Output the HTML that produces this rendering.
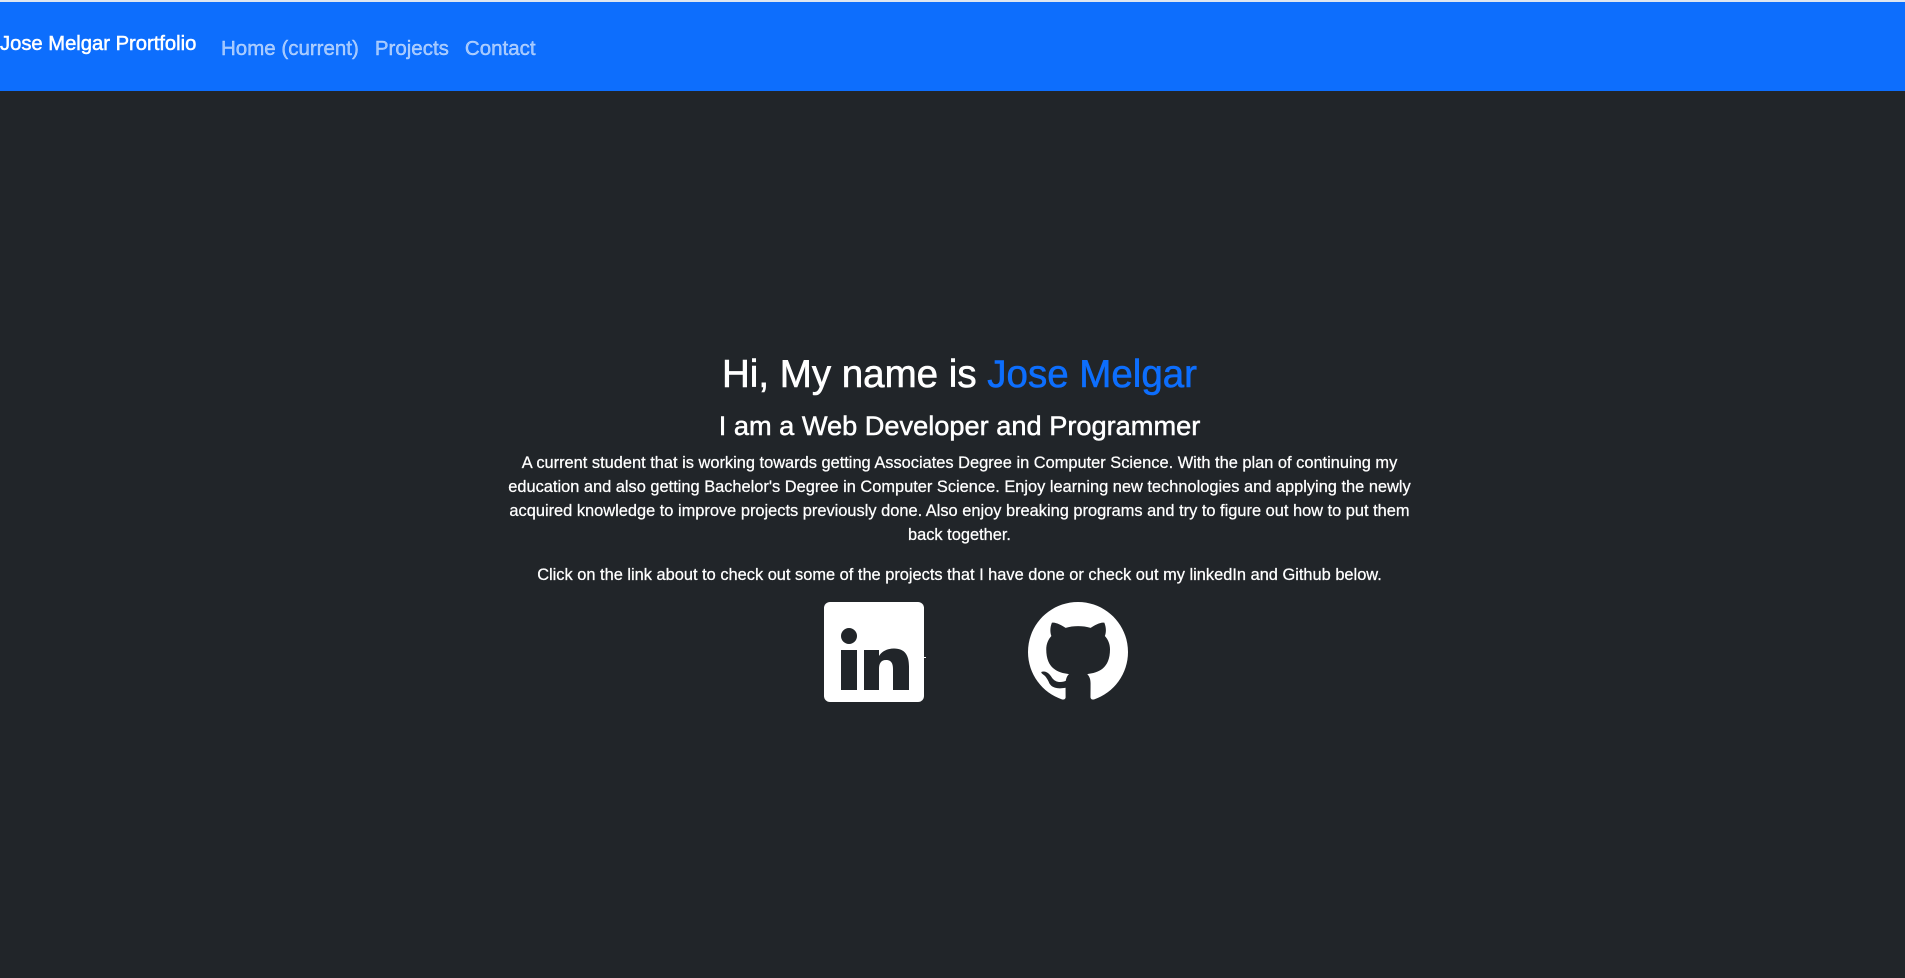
<!DOCTYPE html>
<html><head><meta charset="utf-8">
<style>
html,body{margin:0;padding:0;}
body{width:1905px;height:978px;background:#212529;font-family:"Liberation Sans",sans-serif;color:#fff;overflow:hidden;position:relative;}
.top{position:absolute;top:0;left:0;width:1905px;height:2px;background:#dfe6f0;}
nav{position:absolute;top:2px;left:0;width:1905px;height:89px;background:#0d6efd;}
.brand{position:absolute;left:0;top:31px;font-size:20.2px;color:#fff;white-space:nowrap;-webkit-text-stroke:0.5px #fff;}
.links{position:absolute;left:221px;top:35px;font-size:20.5px;color:rgba(255,255,255,.6);white-space:nowrap;-webkit-text-stroke:0.4px rgba(255,255,255,.6);}
.links span{margin-right:16px;}
.c{position:absolute;left:7px;width:1905px;text-align:center;white-space:nowrap;}
.h1{top:353px;font-size:38.5px;-webkit-text-stroke:0.6px #fff;}
.h1 b{font-weight:normal;color:#0d6efd;-webkit-text-stroke:0.6px #0d6efd;}
.h3{top:410px;font-size:27.2px;-webkit-text-stroke:0.5px #fff;}
.p{top:451px;font-size:16.4px;line-height:24px;-webkit-text-stroke:0.25px #fff;}
.p2{top:563px;font-size:16.4px;line-height:24px;-webkit-text-stroke:0.25px #fff;}
</style></head><body>
<div class="top"></div>
<nav>
<div class="brand">Jose Melgar Prortfolio</div>
<div class="links"><span>Home (current)</span><span>Projects</span><span>Contact</span></div>
</nav>
<div class="c h1">Hi, My name is <b>Jose Melgar</b></div>
<div class="c h3">I am a Web Developer and Programmer</div>
<div class="c p">A current student that is working towards getting Associates Degree in Computer Science. With the plan of continuing my<br>education and also getting Bachelor's Degree in Computer Science. Enjoy learning new technologies and applying the newly<br>acquired knowledge to improve projects previously done. Also enjoy breaking programs and try to figure out how to put them<br>back together.</div>
<div class="c p2">Click on the link about to check out some of the projects that I have done or check out my linkedIn and Github below.</div>
<svg style="position:absolute;left:824px;top:602px" width="102" height="100" viewBox="0 0 102 100">
<rect x="0" y="0" width="100" height="100" rx="6" fill="#fff"/>
<circle cx="25" cy="34" r="8" fill="#212529"/>
<rect x="17" y="48" width="16" height="40" fill="#212529"/>
<path d="M40 48h15v6c3-5 9-7.5 15-7.5 11 0 15 7 15 18V88H69V67c0-6-2-9-7-9s-7 3.5-7 9v21H40z" fill="#212529"/>
<rect x="93" y="55" width="9" height="1" fill="#fff"/>
</svg>
<svg style="position:absolute;left:1028px;top:602px" width="100" height="100" viewBox="0 0 16 16">
<path fill="#fff" d="M8 0C3.58 0 0 3.58 0 8c0 3.54 2.29 6.53 5.47 7.590.4.07.55-.17.55-.38 0-.19-.01-.82-.01-1.49-2.01.37-2.53-.49-2.69-.94-.09-.23-.48-.94-.82-1.13-.28-.15-.68-.52-.01-.53.63-.01 1.08.58 1.23.82.72 1.21 1.87.87 2.33.66.07-.52.28-.87.51-1.07-1.78-.2-3.64-.89-3.64-3.95 0-.87.31-1.59.82-2.15-.08-.2-.36-1.02.08-2.12 0 0 .67-.21 2.2.82.64-.18 1.32-.27 2-.27.68 0 1.36.09 2 .27 1.53-1.04 2.2-.82 2.2-.82.44 1.1.16 1.92.08 2.12.51.56.82 1.27.82 2.15 0 3.07-1.87 3.75-3.65 3.95.29.25.54.73.54 1.48 0 1.07-.01 1.93-.01 2.2 0 .21.15.46.55.38A8.013 8.013 0 0016 8c0-4.42-3.58-8-8-8z"/>
</svg>
</body></html>
